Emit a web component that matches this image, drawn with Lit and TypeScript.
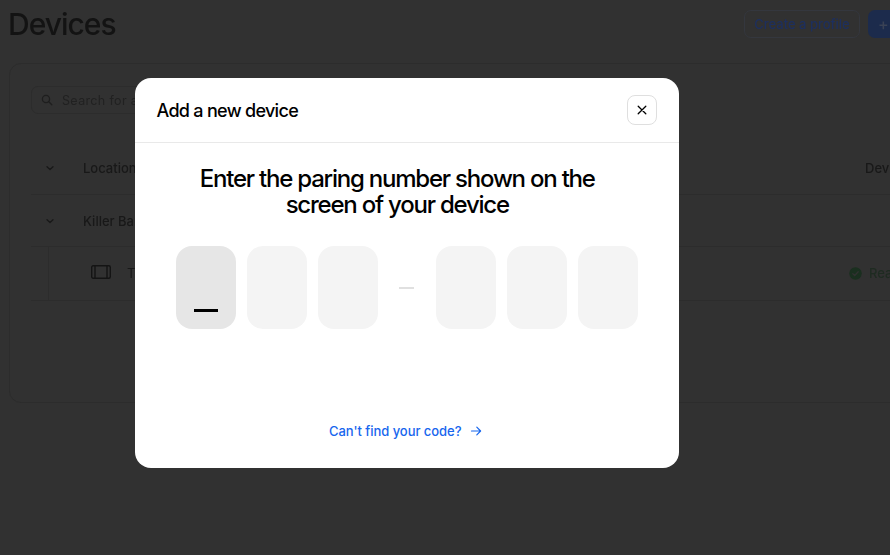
import { LitElement, html, css } from "lit";
import { customElement } from "lit/decorators.js";

const chevron = html`<svg class="chev" width="12" height="12" viewBox="0 0 12 12" fill="none" stroke="currentColor" stroke-width="1.3" stroke-linecap="round" stroke-linejoin="round"><path d="M3 4.7 6 7.5 9 4.7"/></svg>`;

@customElement("app-root")
export class AppRoot extends LitElement {
  static styles = css`
    :host { display: block; width: 890px; height: 555px; overflow: hidden; position: relative; font-family: Inter, "Liberation Sans", sans-serif; background: #313131; color: #181818; }
    .page { width: 1100px; height: 555px; padding: 0 0 0 9px; box-sizing: border-box; display: flex; flex-direction: column; filter: blur(0.6px); }
    .top { display: flex; align-items: center; height: 48px; box-sizing: border-box; }
    h1 { margin: 0 0 0 -1px; font-size: 30px; line-height: 48px; font-weight: 500; color: #131313; letter-spacing: -1px; flex: none; width: 736px; }
    .btn { height: 28px; box-sizing: border-box; border-radius: 7px; font-size: 13px; font-weight: 500; display: flex; align-items: center; }
    .outline { width: 116px; justify-content: center; border: 1px solid #34373e; color: #1d2f5e; margin-right: 8px; }
    .solid { width: 100px; background: #1c2b4c; color: #3a4255; padding-left: 10px; font-size: 16px; }
    .card { margin-top: 15px; width: 1060px; height: 340px; box-sizing: border-box; border: 1px solid #2c2c2c; border-radius: 12px; padding: 22px 0 0 21px; }
    .search { width: 300px; height: 28px; box-sizing: border-box; border: 1px solid #2c2c2c; border-radius: 7px; display: flex; align-items: center; gap: 9px; padding-left: 9px; color: #212121; font-size: 12.5px; letter-spacing: 0.35px; }
    .search svg { color: #1e1e1e; }
    .row { display: grid; grid-template-columns: 52px 782px 1fr; align-items: center; font-size: 13px; font-weight: 500; }
    .head { height: 81px; padding-top: 27px; box-sizing: border-box; border-bottom: 1px solid #2c2c2c; }
    .group { height: 51px; border-bottom: 1px solid #2c2c2c; }
    .device { height: 53px; border-bottom: 1px solid #2c2c2c; grid-template-columns: 18px 62px 1fr 200px; font-weight: 400; }
    .chev { margin-left: 13px; color: #181818; }
    .line { height: 100%; border-right: 1px solid #2c2c2c; }
    .tv { margin-left: 42px; margin-top: -3px; }
    .devname { margin-left: 16px; margin-top: -1px; }
    .status { display: flex; align-items: center; gap: 7px; color: #1e2b21; font-weight: 500; margin-left: -19px; margin-top: -1px; }
    .modal { position: absolute; left: 134.5px; top: 78px; width: 544.5px; height: 390px; background: #fff; border-radius: 16px; display: flex; flex-direction: column; color: #000; }
    .mhead { flex: none; height: 65px; box-sizing: border-box; border-bottom: 1px solid #e9e9e9; display: flex; align-items: center; justify-content: space-between; padding: 0 22px; }
    .mtitle { font-size: 18px; font-weight: 500; letter-spacing: -0.7px; }
    .close { width: 30px; height: 30px; box-sizing: border-box; border: 1px solid #dfdfdf; border-radius: 8px; display: flex; align-items: center; justify-content: center; background: #fff; padding: 0; }
    .body { flex: 1; display: flex; flex-direction: column; align-items: center; padding-top: 23px; box-sizing: border-box; }
    h2 { margin: 0 19px 0 0; width: 440px; text-align: center; font-size: 24px; line-height: 26px; font-weight: 500; letter-spacing: -1.22px; }
    .code { display: flex; align-items: center; margin-top: 28px; gap: 11px; }
    .box { width: 60px; height: 83px; border-radius: 16px; background: #f4f4f4; box-sizing: border-box; display: flex; align-items: flex-end; justify-content: center; padding-bottom: 17px; }
    .box.active { background: #e6e6e6; }
    .cursor { width: 24px; height: 3px; background: #000; }
    .dash { width: 15px; height: 2px; background: #e0e0e0; margin: 0 11px 0 10px; }
    .link { margin: auto 2px 29px 0; display: flex; align-items: center; gap: 9px; font-size: 13px; font-weight: 500; color: #1766ee; letter-spacing: -0.05px; line-height: 16px; }
  `;

  render() {
    return html`
      <div class="page">
        <div class="top">
          <h1>Devices</h1>
          <div class="btn outline">Create a profile</div>
          <div class="btn solid">+</div>
        </div>
        <div class="card">
          <div class="search">
            <svg width="12" height="12" viewBox="0 0 12 12" fill="none" stroke="currentColor" stroke-width="1.3" stroke-linecap="round"><circle cx="5" cy="5" r="3.6"/><path d="M7.8 7.8 10.8 10.8"/></svg>
            Search for a device
          </div>
          <div class="row head">${chevron}<span>Location</span><span>Device status</span></div>
          <div class="row group">${chevron}<span>Killer Bar</span><span></span></div>
          <div class="row device">
            <div class="line"></div>
            <svg class="tv" width="20" height="14" viewBox="0 0 20 14" fill="none" stroke="#141414" stroke-width="1.4"><rect x="0.7" y="0.7" width="18.6" height="12.6" rx="1.5"/><path d="M4 1v12M16 1v12"/></svg>
            <span class="devname">TV</span>
            <span class="status">
              <svg width="13" height="13" viewBox="0 0 13 13"><circle cx="6.5" cy="6.5" r="6.2" fill="#1a2f1f"/><path d="M3.8 6.7 5.7 8.5 9.2 4.8" fill="none" stroke="#313131" stroke-width="1.3" stroke-linecap="round" stroke-linejoin="round"/></svg>
              Ready
            </span>
          </div>
        </div>
      </div>
      <div class="modal">
        <div class="mhead">
          <span class="mtitle">Add a new device</span>
          <button class="close" aria-label="Close">
            <svg width="10" height="10" viewBox="0 0 10 10" fill="none" stroke="#000" stroke-width="1.3" stroke-linecap="round"><path d="M1.2 1.2 8.8 8.8M8.8 1.2 1.2 8.8"/></svg>
          </button>
        </div>
        <div class="body">
          <h2>Enter the paring number shown on the screen of your device</h2>
          <div class="code">
            <div class="box active"><div class="cursor"></div></div>
            <div class="box"></div>
            <div class="box"></div>
            <div class="dash"></div>
            <div class="box"></div>
            <div class="box"></div>
            <div class="box"></div>
          </div>
          <div class="link">
            Can't find your code?
            <svg width="12" height="12" viewBox="0 0 12 12" fill="none" stroke="currentColor" stroke-width="1.2" stroke-linecap="round" stroke-linejoin="round"><path d="M1.5 6h9M6.8 2.2 10.6 6 6.8 9.8"/></svg>
          </div>
        </div>
      </div>
    `;
  }
}
